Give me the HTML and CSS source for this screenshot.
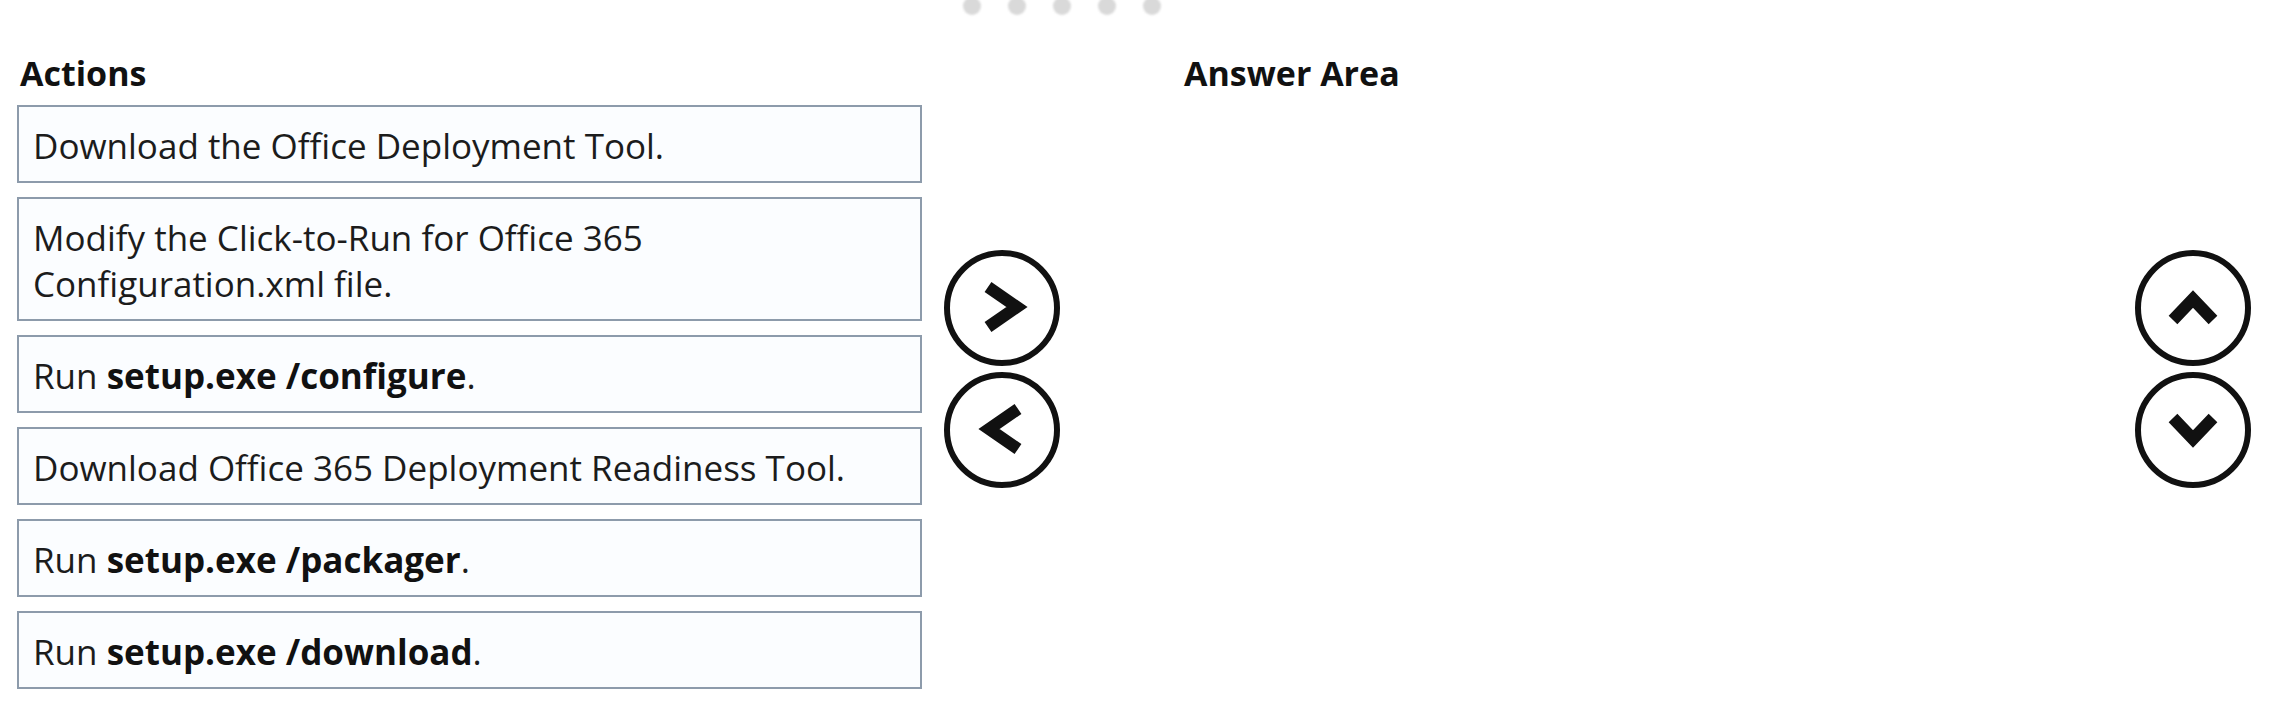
FILE: index.html
```html
<!DOCTYPE html>
<html lang="en">
<head>
  <meta charset="UTF-8" />
  <title>Actions / Answer Area</title>
  <link rel="stylesheet" href="styles.css">
</head>
<body>
  <div class="dots">
    <span></span><span></span><span></span><span></span><span></span>
  </div>
  <div class="workspace">
    <section class="actions">
      <h2>Actions</h2>
      <ul class="items">
        <li>Download the Office Deployment Tool.</li>
        <li>Modify the Click-to-Run for Office 365<br>Configuration.xml file.</li>
        <li>Run <b>setup.exe /configure</b>.</li>
        <li>Download Office 365 Deployment Readiness Tool.</li>
        <li>Run <b>setup.exe /packager</b>.</li>
        <li>Run <b>setup.exe /download</b>.</li>
      </ul>
    </section>
    <div class="move">
      <button class="round" title="Move right">
        <svg viewBox="0 0 118 118" width="118" height="118"><circle cx="59" cy="59" r="55" /><polyline points="45,38 74,58 45,78" /></svg>
      </button>
      <button class="round" title="Move left">
        <svg viewBox="0 0 118 118" width="118" height="118"><circle cx="59" cy="59" r="55" /><polyline points="75,38 46,58 75,78" /></svg>
      </button>
    </div>
    <section class="answer">
      <h2>Answer Area</h2>
    </section>
    <div class="move order">
      <button class="round" title="Move up">
        <svg viewBox="0 0 118 118" width="118" height="118"><circle cx="59" cy="59" r="55" /><polyline points="39,71 59,50 79,71" /></svg>
      </button>
      <button class="round" title="Move down">
        <svg viewBox="0 0 118 118" width="118" height="118"><circle cx="59" cy="59" r="55" /><polyline points="39,47 59,68 79,47" /></svg>
      </button>
    </div>
  </div>
</body>
</html>
```

FILE: styles.css
```css
body {
  font-family: "Open Sans", "Noto Sans", sans-serif;
  background: #fff;
  color: #1c1c1c;
  margin: 0;
  padding: 0;
}
.dots {
  display: flex;
  gap: 27px;
  padding-left: 963px;
  margin-top: -3px;
}
.dots span {
  width: 18px;
  height: 18px;
  border-radius: 50%;
  background: #d9d9d9;
  filter: blur(1px);
}
.workspace {
  display: flex;
  padding: 38px 20px 0 17px;
}
h2 {
  margin: 0;
  font-size: 34px;
  line-height: 40px;
  font-weight: 700;
  color: #111;
  padding-left: 3px;
}
.actions {
  width: 905px;
}
.items {
  list-style: none;
  margin: 12px 0 0;
  padding: 0;
  display: flex;
  flex-direction: column;
  gap: 14px;
}
.items li {
  border: 2px solid #8d9bab;
  background: #fbfdff;
  padding: 16px 14px 12px;
  font-size: 35px;
  line-height: 46px;
}
.items b {
  font-weight: 700;
  color: #111;
}
.move {
  display: flex;
  flex-direction: column;
  gap: 4px;
  margin-left: 21px;
  padding-top: 196px;
}
.round {
  border: none;
  background: none;
  padding: 0;
  width: 118px;
  height: 118px;
  cursor: pointer;
}
.round svg {
  display: block;
  fill: none;
  stroke: #111;
}
.round circle {
  stroke-width: 6;
}
.round polyline {
  stroke-width: 12;
  stroke-linejoin: miter;
}
.answer {
  flex: 1;
  margin-left: 120px;
}
.order {
  margin-left: 0;
}
```
